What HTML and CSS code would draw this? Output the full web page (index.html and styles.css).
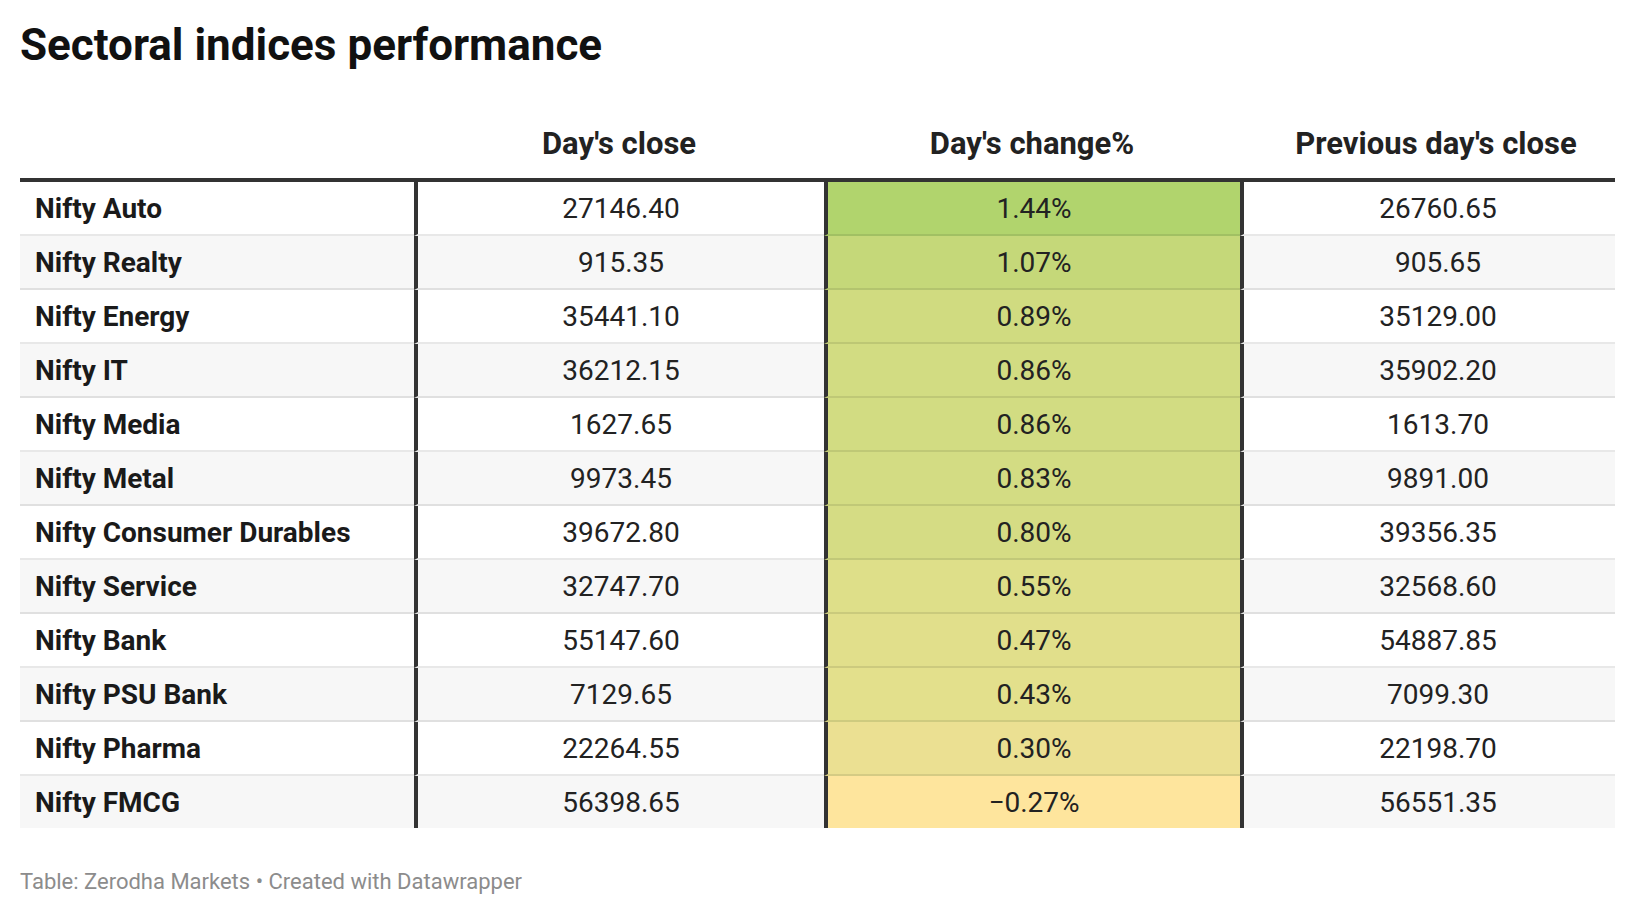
FILE: index.html
```html
<!DOCTYPE html>
<html lang="en">
<head>
<meta charset="utf-8">
<title>Sectoral indices performance</title>
<link rel="stylesheet" href="styles.css">
</head>
<body>
<div class="chart">
  <h1 class="title">Sectoral indices performance</h1>
  <table class="data">
    <colgroup>
      <col class="c-name">
      <col class="c-close">
      <col class="c-change">
      <col class="c-prev">
    </colgroup>
    <thead>
      <tr>
        <th class="name"></th>
        <th>Day's close</th>
        <th>Day's change%</th>
        <th class="last">Previous day's close</th>
      </tr>
    </thead>
    <tbody>
      <tr><td class="name">Nifty Auto</td><td class="v">27146.40</td><td class="v chg" style="background-color:#b1d46d">1.44%</td><td class="v last">26760.65</td></tr>
      <tr><td class="name">Nifty Realty</td><td class="v">915.35</td><td class="v chg" style="background-color:#c5d879">1.07%</td><td class="v last">905.65</td></tr>
      <tr><td class="name">Nifty Energy</td><td class="v">35441.10</td><td class="v chg" style="background-color:#d0db80">0.89%</td><td class="v last">35129.00</td></tr>
      <tr><td class="name">Nifty IT</td><td class="v">36212.15</td><td class="v chg" style="background-color:#d2dc82">0.86%</td><td class="v last">35902.20</td></tr>
      <tr><td class="name">Nifty Media</td><td class="v">1627.65</td><td class="v chg" style="background-color:#d2dc82">0.86%</td><td class="v last">1613.70</td></tr>
      <tr><td class="name">Nifty Metal</td><td class="v">9973.45</td><td class="v chg" style="background-color:#d3dc83">0.83%</td><td class="v last">9891.00</td></tr>
      <tr><td class="name">Nifty Consumer Durables</td><td class="v">39672.80</td><td class="v chg" style="background-color:#d5dc84">0.80%</td><td class="v last">39356.35</td></tr>
      <tr><td class="name">Nifty Service</td><td class="v">32747.70</td><td class="v chg" style="background-color:#dedf89">0.55%</td><td class="v last">32568.60</td></tr>
      <tr><td class="name">Nifty Bank</td><td class="v">55147.60</td><td class="v chg" style="background-color:#e1df8b">0.47%</td><td class="v last">54887.85</td></tr>
      <tr><td class="name">Nifty PSU Bank</td><td class="v">7129.65</td><td class="v chg" style="background-color:#e3e08c">0.43%</td><td class="v last">7099.30</td></tr>
      <tr><td class="name">Nifty Pharma</td><td class="v">22264.55</td><td class="v chg" style="background-color:#ebe092">0.30%</td><td class="v last">22198.70</td></tr>
      <tr><td class="name">Nifty FMCG</td><td class="v">56398.65</td><td class="v chg" style="background-color:#fee59d">−0.27%</td><td class="v last">56551.35</td></tr>
    </tbody>
  </table>
  <p class="footer">Table: Zerodha Markets • Created with Datawrapper</p>
</div>
</body>
</html>
```

FILE: styles.css
```css
html, body {
  margin: 0;
  padding: 0;
  background: #ffffff;
}

body {
  font-family: Roboto, "Liberation Sans", Arial, sans-serif;
  color: #222222;
}

.chart {
  padding: 19px 21px 0 20px;
}

.title {
  margin: 0;
  font-size: 44px;
  line-height: 53px;
  font-weight: 700;
  color: #111111;
}

.data {
  width: 1595px;
  table-layout: fixed;
  border-collapse: separate;
  border-spacing: 0;
}

.c-name { width: 394px; }
.c-close { width: 410px; }
.c-change { width: 416px; }
.c-prev { width: 375px; }

.data th {
  height: 90px;
  padding: 0 8px 16px;
  vertical-align: bottom;
  font-size: 31px;
  line-height: 36px;
  font-weight: 700;
  color: #222222;
  text-align: center;
  border-bottom: 4px solid #333333;
  white-space: nowrap;
}

.data th.last {
  padding-left: 17px;
  padding-right: 0;
}

.data td {
  padding: 1px 15px 0;
  height: 51px;
  line-height: 51px;
  font-size: 28px;
  border-bottom: 2px solid rgba(0, 0, 0, 0.09);
  white-space: nowrap;
}

.data tbody tr:nth-child(even) td {
  background-color: #f7f7f7;
}

.data tbody tr:last-child td {
  border-bottom: 0;
}

.data td.name {
  font-weight: 700;
  color: #1a1a1a;
  padding-left: 15px;
}

.data td.v {
  text-align: center;
  border-left: 4px solid #333333;
}

.data td.last {
  padding-left: 24px;
  padding-right: 7px;
}

.footer {
  margin: 41px 0 0;
  font-size: 22px;
  line-height: 26px;
  color: #8c8c8c;
}
```
